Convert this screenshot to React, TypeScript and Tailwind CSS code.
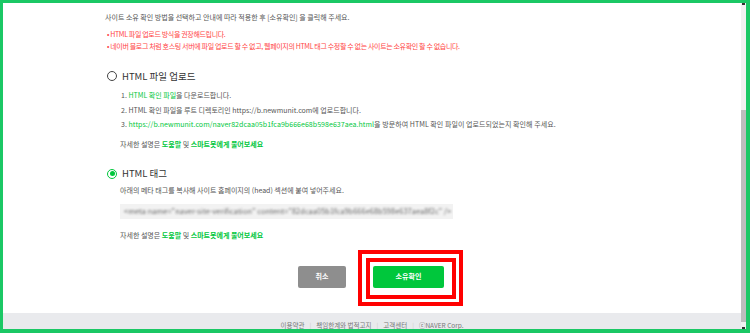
const font = { fontFamily: '"Noto Sans CJK KR", "Noto Sans", sans-serif' };

const Radio = ({ checked }: { checked?: boolean }) =>
  checked ? (
    <span className="flex h-[10px] w-[10px] items-center justify-center rounded-full border-[1.5px] border-[#00c73c]">
      <span className="h-[5px] w-[5px] rounded-full bg-[#00c73c]" />
    </span>
  ) : (
    <span className="h-[10px] w-[10px] rounded-full border-[1.3px] border-[#444]" />
  );

const HelpLine = () => (
  <p className="pl-[15px] text-[7px] leading-[12px] text-[#555]">
    자세한 설명은 <span className="font-bold text-[#00c73c]">도움말</span> 및{' '}
    <span className="font-bold text-[#00c73c]">스마트봇에게 물어보세요</span>
  </p>
);

export default function App() {
  return (
    <div
      className="flex h-[333px] w-[750px] overflow-hidden border-t-[3px] border-r-[4px] border-b-[4px] border-l-[3px] border-[#1bc865] bg-white"
      style={font}
    >
      <main className="flex min-w-0 flex-1 flex-col overflow-hidden">
        <div className="pl-[102px] pt-[8px]">
          <p className="text-[7px] leading-[12px] text-[#555]">
            사이트 소유 확인 방법을 선택하고 안내에 따라 적용한 후 [소유확인] 을 클릭해 주세요.
          </p>
          <ul className="mt-[5px] pl-[2px] text-[7px] leading-[12px] tracking-[-0.35px] text-[#ff4545]">
            <li>• HTML 파일 업로드 방식을 권장해드립니다.</li>
            <li>
              • 네이버 블로그 처럼 호스팅 서버에 파일 업로드 할 수 없고, 웹페이지의 HTML 태그 수정할 수 없는 사이트는 소유확인 할 수 없습니다.
            </li>
          </ul>

          <div className="mt-[17px] flex h-[14px] items-center gap-[5px] pl-[2px]">
            <Radio />
            <span className="text-[9.5px] text-[#333]">HTML 파일 업로드</span>
          </div>
          <ol className="mt-[5px] pl-[16px] text-[7px] leading-[14.5px] text-[#555]">
            <li>
              1. <span className="text-[#00c73c]">HTML 확인 파일</span>을 다운로드합니다.
            </li>
            <li>2. HTML 확인 파일을 루트 디렉토리인 https://b.newmunit.com에 업로드합니다.</li>
            <li className="tracking-[0.05px]">
              3.{' '}
              <span className="text-[#00c73c]">
                https://b.newmunit.com/naver82dcaa05b1fca9b666e68b598e637aea.html
              </span>
              을 방문하여 HTML 확인 파일이 업로드되었는지 확인해 주세요.
            </li>
          </ol>
          <div className="mt-[6px]">
            <HelpLine />
          </div>

          <div className="mt-[17px] flex h-[14px] items-center gap-[5px] pl-[2px]">
            <Radio checked />
            <span className="text-[9.5px] text-[#333]">HTML 태그</span>
          </div>
          <p className="mt-[3px] pl-[15px] text-[7px] leading-[12px] text-[#555]">
            아래의 메타 태그를 복사해 사이트 홈페이지의 (head) 섹션에 붙여 넣어주세요.
          </p>
          <div className="ml-[15px] mt-[8px] flex h-[15px] w-[333px] items-center overflow-hidden bg-[#f2f2f2] px-[4px]">
            <span className="whitespace-nowrap text-[7.3px] tracking-[0.1px] text-[#666] blur-[0.8px]">
              {'<meta name="naver-site-verification" content="82dcaa05b1fca9b666e68b598e637aea8f2c" />'}
            </span>
          </div>
          <div className="mt-[10px]">
            <HelpLine />
          </div>
        </div>

        <div className="mt-[25px] flex justify-center gap-[27px] pr-[2px]">
          <button className="flex h-[22px] w-[48px] items-center justify-center rounded-[2px] bg-[#8e8e8e] text-[7px] font-bold text-white">
            취소
          </button>
          <div className="relative">
            <button className="flex h-[22px] w-[71px] items-center justify-center rounded-[2px] bg-[#00c73c] text-[7px] font-bold text-white">
              소유확인
            </button>
            <span className="absolute -left-[15px] -top-[16px] h-[56px] w-[105px] border-[4px] border-[#ff0000]" />
            <span className="absolute -left-[7px] -top-[8px] h-[41px] w-[90px] border-[4px] border-[#ff0000]" />
          </div>
        </div>

        <footer className="mt-[25px] flex h-[40px] justify-center bg-[#e9eaed] pt-[9px]">
          <div className="flex h-[8px] items-center gap-[5px] text-[6.5px] text-[#777]">
            <span>이용약관</span>
            <span className="text-[#ccc]">|</span>
            <span>책임한계와 법적고지</span>
            <span className="text-[#ccc]">|</span>
            <span>고객센터</span>
            <span className="text-[#ccc]">|</span>
            <span>ⓒNAVER Corp.</span>
          </div>
        </footer>
      </main>

      <div className="flex w-[5px] flex-col bg-[#f1f1f1]">
        <div className="flex h-[4px] items-start justify-center">
          <span className="h-[2px] w-[3px] bg-[#333]" />
        </div>
        <div className="h-[103px]" />
        <div className="h-[212px] bg-[#bdbdbd]" />
        <div className="flex-1" />
        <div className="flex h-[4px] items-end justify-center">
          <span className="h-[2px] w-[3px] bg-[#333]" />
        </div>
      </div>
    </div>
  );
}
